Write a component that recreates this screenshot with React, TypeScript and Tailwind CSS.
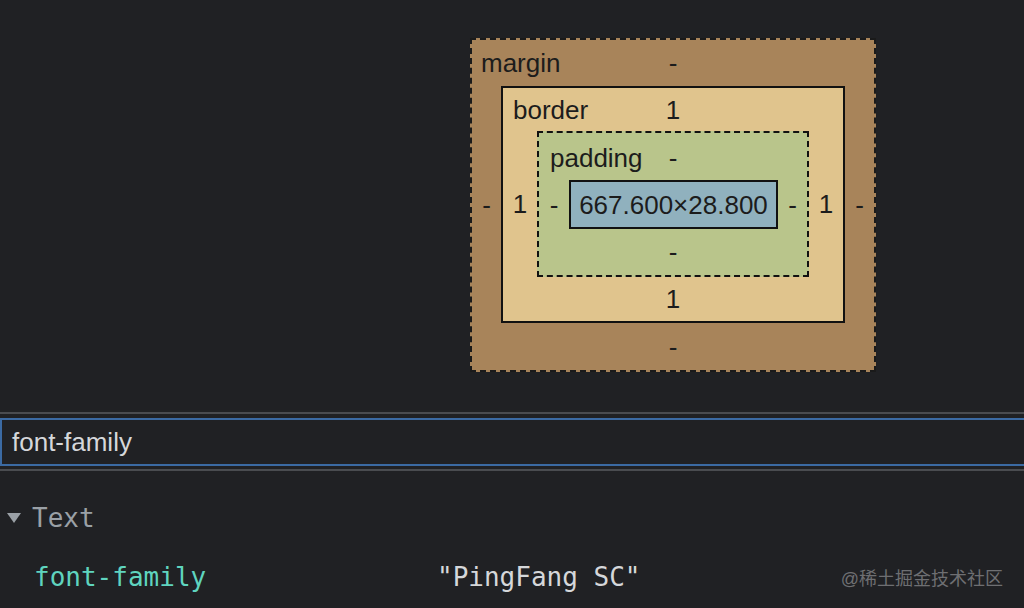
const boxText = "text-[26px] leading-none text-[#1c1c1c]";

const Val = ({ v }: { v: string }) => (
  <div className="flex items-center justify-center">{v}</div>
);

const BoxModel = () => (
  <div
    className={`grid w-fit grid-cols-[29px_344px_29px] grid-rows-[46px_237px_47px] border-2 border-dashed border-[#1a1a1a] bg-[#a8845a] ${boxText}`}
    style={{ fontFamily: '"Liberation Sans", Arial, sans-serif' }}
  >
    {/* margin */}
    <div className="col-span-3 grid grid-cols-[1fr_auto_1fr] items-center">
      <span className="justify-self-start pl-[9px]">margin</span>
      <span>-</span>
      <span />
    </div>
    <Val v="-" />
    <div className="grid grid-cols-[34px_272px_34px] grid-rows-[43px_146px_44px] border-2 border-[#111] bg-[#e0c48d]">
      {/* border */}
      <div className="col-span-3 grid grid-cols-[1fr_auto_1fr] items-center">
        <span className="justify-self-start pl-[10px]">border</span>
        <span>1</span>
        <span />
      </div>
      <Val v="1" />
      <div className="grid grid-cols-[30px_209px_29px] grid-rows-[47px_49px_46px] border-2 border-dashed border-[#111] bg-[#b9c58b]">
        {/* padding */}
        <div className="col-span-3 grid grid-cols-[1fr_auto_1fr] items-center pt-[2px]">
          <span className="justify-self-start pl-[11px]">padding</span>
          <span>-</span>
          <span />
        </div>
        <Val v="-" />
        <div className="flex items-center justify-center border-2 border-[#111] bg-[#90b1be]">
          667.600×28.800
        </div>
        <Val v="-" />
        <div className="col-span-3 flex items-center justify-center">-</div>
      </div>
      <Val v="1" />
      <div className="col-span-3 flex items-center justify-center">1</div>
    </div>
    <Val v="-" />
    <div className="col-span-3 flex items-center justify-center">-</div>
  </div>
);

const App = () => {
  return (
    <div className="relative h-[608px] w-[1024px] overflow-hidden bg-[#202124]">
      {/* 박스 모델 */}
      <div className="h-[412px] pl-[470px] pt-[38px]">
        <BoxModel />
      </div>
      <div className="h-[2px] bg-[#4a4c50]" />
      <div className="h-[4px]" />
      {/* 필터 입력 */}
      <div
        className="flex h-[48px] items-center border-2 border-r-0 border-[#3b6aa3] pl-[10px] text-[26px] text-[#d5d7da]"
        style={{ fontFamily: '"Liberation Sans", Arial, sans-serif' }}
      >
        font-family
      </div>
      <div className="h-[3px]" />
      <div className="h-[2px] bg-[#4a4c50]" />

      {/* 속성 목록 */}
      <div
        className="pt-[11px] text-[26px]"
        style={{ fontFamily: '"DejaVu Sans Mono", Menlo, monospace' }}
      >
        <div className="flex h-[72px] items-center">
          <svg width="14" height="12" viewBox="0 0 14 12" className="ml-[7px] mr-[11px]">
            <polygon points="0,1 14,1 7,11" fill="#9aa0a6" />
          </svg>
          <span className="text-[#9aa0a6]">Text</span>
        </div>
        <div className="flex h-[46px] items-center pl-[34px]">
          <span className="w-[403px] text-[#5fd4bf]">font-family</span>
          <span className="text-[#d5d7da]">"PingFang SC"</span>
        </div>
      </div>

      {/* 워터마크 */}
      <div
        className="absolute right-[21px] top-[566px] text-[18px] text-[#6e6f72]"
        style={{ fontFamily: '"Liberation Sans", "Noto Sans CJK SC", sans-serif' }}
      >
        @稀土掘金技术社区
      </div>
    </div>
  );
};

export default App;
